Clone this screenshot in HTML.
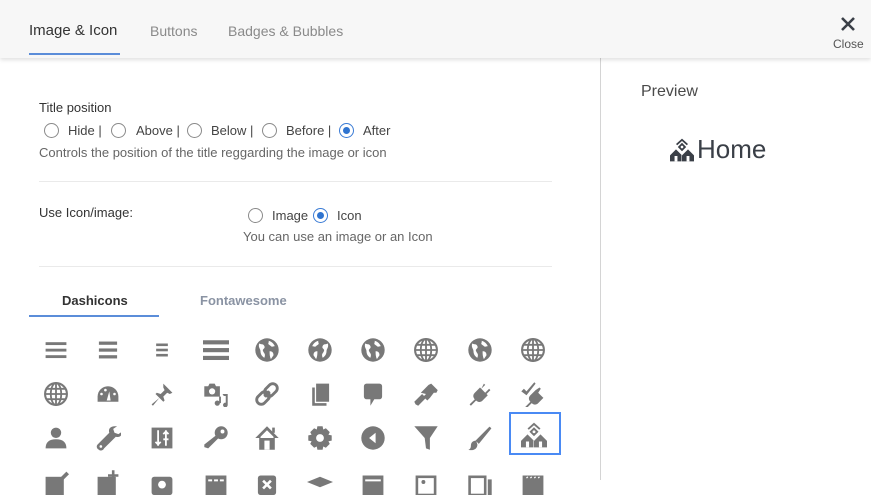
<!DOCTYPE html>
<html><head><meta charset="utf-8">
<style>
*{margin:0;padding:0;box-sizing:border-box}
html,body{width:871px;height:480px;overflow:hidden;background:#fff;font-family:"Liberation Sans",sans-serif;color:#333}
.abs{position:absolute;white-space:nowrap}
.hdr{position:absolute;left:0;top:0;width:871px;height:58px;background:#f7f7f7;box-shadow:0 2px 4px rgba(0,0,0,.12);z-index:2}
.radio{position:absolute;width:15px;height:15px;border:1px solid #8a8a8a;border-radius:50%;background:#fff}
.radio.on{border-color:#3a7bd5}
.radio.on::after{content:"";position:absolute;left:3px;top:3px;width:7px;height:7px;border-radius:50%;background:#2f74d0}
.t13{font-size:13px}
.ic{position:absolute;width:26px;height:26px}
</style></head><body>
<svg width="0" height="0" style="position:absolute">
<defs>
<g id="globe"><circle cx="10" cy="10" r="9" fill="#787878"/><path d="M4 5c2 1 3 0 4 2s-2 2-1 4 2 2 1 5c-2-1-3-3-3-5S3 8 4 5zM11 3c2 0 4 2 5 4-1 0-2 1-3 0s-2-1-2-2 1-1 0-2zM12 11c2 0 3 1 3 3l-2 3c-1-2-1-4-1-6z" fill="#fff"/></g>
<g id="grid"><circle cx="10" cy="10" r="8.4" fill="none" stroke="#787878" stroke-width="1.6"/><ellipse cx="10" cy="10" rx="4" ry="8.4" fill="none" stroke="#787878" stroke-width="1.4"/><path d="M10 1.6v16.8M1.6 10h16.8M3 6h14M3 14h14" stroke="#787878" stroke-width="1.4"/></g>
<g id="home3"><path d="M10 0.5L15 5 14 6 10 2.5 6 6 5 5z"/><path d="M10 4L13.5 7.5 10 11 6.5 7.5z"/><circle cx="10" cy="7.5" r="1.1" fill="#fff"/><path d="M0 14.5L5 9.5 10 14.5V19.5H0z"/><path d="M10 14.5L15 9.5 20 14.5V19.5H10z" stroke="#fff" stroke-width="0.8" paint-order="stroke"/><rect x="3.8" y="15" width="2.4" height="4.5" fill="#fff"/><rect x="13.8" y="15" width="2.4" height="4.5" fill="#fff"/></g>
</defs></svg>

<div class="hdr">
 <div class="abs" style="left:29px;top:22px;font-size:15px;color:#333">Image &amp; Icon</div>
 <div style="position:absolute;left:29px;top:53px;width:91px;height:2px;background:#5b8dd9"></div>
 <div class="abs" style="left:150px;top:23px;font-size:14px;color:#8a8a8a">Buttons</div>
 <div class="abs" style="left:228px;top:23px;font-size:14px;color:#8a8a8a">Badges &amp; Bubbles</div>
 <svg class="abs" style="left:840px;top:16px" width="16" height="16" viewBox="0 0 16 16"><path d="M2 2L14 14M14 2L2 14" stroke="#3a3f47" stroke-width="2.6"/></svg>
 <div class="abs" style="left:833px;top:37px;font-size:12px;color:#555">Close</div>
</div>
<div style="position:absolute;left:600px;top:58px;width:1px;height:422px;background:#d4d4d4"></div>

<div class="abs t13" style="left:39px;top:100px;color:#333">Title position</div>
<div class="radio" style="left:44px;top:123px"></div><div class="abs t13" style="left:68px;top:123px;color:#444">Hide |</div>
<div class="radio" style="left:111px;top:123px"></div><div class="abs t13" style="left:136px;top:123px;color:#444">Above |</div>
<div class="radio" style="left:187px;top:123px"></div><div class="abs t13" style="left:211px;top:123px;color:#444">Below |</div>
<div class="radio" style="left:262px;top:123px"></div><div class="abs t13" style="left:286px;top:123px;color:#444">Before |</div>
<div class="radio on" style="left:339px;top:123px"></div><div class="abs t13" style="left:363px;top:123px;color:#444">After</div>
<div class="abs t13" style="left:39px;top:145px;color:#666">Controls the position of the title reggarding the image or icon</div>
<div style="position:absolute;left:39px;top:181px;width:513px;height:1px;background:#eaeaea"></div>

<div class="abs t13" style="left:39px;top:205px;color:#333">Use Icon/image:</div>
<div class="radio" style="left:248px;top:208px"></div><div class="abs t13" style="left:272px;top:208px;color:#444">Image</div>
<div class="radio on" style="left:313px;top:208px"></div><div class="abs t13" style="left:337px;top:208px;color:#444">Icon</div>
<div class="abs t13" style="left:243px;top:229px;color:#666">You can use an image or an Icon</div>
<div style="position:absolute;left:39px;top:266px;width:513px;height:1px;background:#eaeaea"></div>

<div class="abs t13" style="left:62px;top:293px;font-weight:bold;color:#333">Dashicons</div>
<div class="abs t13" style="left:200px;top:293px;font-weight:bold;color:#8a93a3">Fontawesome</div>
<div style="position:absolute;left:29px;top:315px;width:130px;height:2px;background:#5b8dd9"></div>

<!-- row 1 -->
<svg class="ic" style="left:43px;top:337px" viewBox="0 0 20 20" fill="#787878"><rect x="2" y="4" width="16" height="2.2"/><rect x="2" y="9" width="16" height="2.2"/><rect x="2" y="14" width="16" height="2.2"/></svg>
<svg class="ic" style="left:95px;top:337px" viewBox="0 0 20 20" fill="#787878"><rect x="3" y="3.5" width="14" height="2.5"/><rect x="3" y="8.8" width="14" height="2.5"/><rect x="3" y="14" width="14" height="2.5"/></svg>
<svg class="ic" style="left:149px;top:337px" viewBox="0 0 20 20" fill="#787878"><rect x="5.5" y="5" width="9" height="2"/><rect x="5.5" y="9" width="9" height="2"/><rect x="5.5" y="13" width="9" height="2"/></svg>
<svg class="ic" style="left:203px;top:337px" viewBox="0 0 20 20" fill="#787878"><rect x="0" y="2.5" width="20" height="3.2"/><rect x="0" y="8.5" width="20" height="3.2"/><rect x="0" y="14.5" width="20" height="3.2"/></svg>
<svg class="ic" style="left:254px;top:337px" viewBox="0 0 20 20"><use href="#globe"/></svg>
<svg class="ic" style="left:307px;top:337px" viewBox="0 0 20 20"><use href="#globe" transform="translate(20 0) scale(-1 1)"/></svg>
<svg class="ic" style="left:360px;top:337px" viewBox="0 0 20 20"><use href="#globe"/></svg>
<svg class="ic" style="left:413px;top:337px" viewBox="0 0 20 20"><use href="#grid"/></svg>
<svg class="ic" style="left:467px;top:337px" viewBox="0 0 20 20"><use href="#globe"/></svg>
<svg class="ic" style="left:520px;top:337px" viewBox="0 0 20 20"><use href="#grid"/></svg>
<!-- row 2 -->
<svg class="ic" style="left:43px;top:381px" viewBox="0 0 20 20"><use href="#grid"/></svg>
<svg class="ic" style="left:95px;top:381px" viewBox="0 0 20 20" fill="#787878"><path d="M10 4a8 8 0 0 1 8 8v4H2v-4a8 8 0 0 1 8-8z"/><path d="M9 15l2-7 1 7z" fill="#fff"/><circle cx="5" cy="10" r="1" fill="#fff"/><circle cx="8" cy="7" r="1" fill="#fff"/><circle cx="15" cy="10" r="1" fill="#fff"/></svg>
<svg class="ic" style="left:149px;top:381px" viewBox="0 0 20 20" fill="#787878"><path d="M11 2l7 7-2 1-2-1-3 3 1 3-1 1-3-3-5 6-1-1 6-5-3-3 1-1 3 1 3-3-1-2z"/></svg>
<svg class="ic" style="left:203px;top:381px" viewBox="0 0 20 20" fill="#787878"><path d="M1 4h3l1-2h4l1 2h3v8H1z"/><circle cx="7" cy="8" r="2.4" fill="#fff"/><path d="M15 10h4v8.5a1.8 1.8 0 1 1-1.5-1.8V11.5H16z"/><circle cx="11" cy="17" r="2"/><rect x="12.4" y="12" width="1.4" height="5"/></svg>
<svg class="ic" style="left:254px;top:381px" viewBox="0 0 20 20" fill="none" stroke="#787878" stroke-width="2.2"><path d="M8 12l4-4"/><rect x="9.5" y="1.5" width="7" height="11" rx="3.5" transform="rotate(45 13 7)"/><rect x="3.5" y="7.5" width="7" height="11" rx="3.5" transform="rotate(45 7 13)"/></svg>
<svg class="ic" style="left:307px;top:381px" viewBox="0 0 20 20" fill="#787878"><path d="M7 2h10v14H7z"/><path d="M4 5h2v12h9v2H4z"/></svg>
<svg class="ic" style="left:360px;top:381px" viewBox="0 0 20 20" fill="#787878"><path d="M5 2h10a2 2 0 0 1 2 2v8a2 2 0 0 1-2 2h-4l-3 5v-5H5a2 2 0 0 1-2-2V4a2 2 0 0 1 2-2z"/></svg>
<svg class="ic" style="left:413px;top:381px" viewBox="0 0 20 20" fill="#787878"><path d="M12 3l2-1 5 5-1 2-2 0-3 4-2 2-3-3 2-2-4-1z"/><path d="M7 10l3 3-6 6-2-1-1-2z"/></svg>
<svg class="ic" style="left:467px;top:381px" viewBox="0 0 20 20" fill="#787878"><path d="M13 2l1 1-3 3 3 3 3-3 1 1-3 3 1 1-4 4c-2 2-4 1-5 0l-4 4-1-1 4-4c-1-1-2-3 0-5l4-4 1 1z"/></svg>
<svg class="ic" style="left:520px;top:381px" viewBox="0 0 20 20" fill="#787878"><path d="M1 8l2-2 2 2 6-7 1 1-7 9z"/><path d="M15 5l1 1-2 3 3 3 1 1-4 4c-2 2-4 1-5 0l-4 4-1-1 4-4c-1-1-2-3 0-5l4-4z"/></svg>
<!-- row 3 -->
<svg class="ic" style="left:43px;top:425px" viewBox="0 0 20 20" fill="#787878"><circle cx="10" cy="6" r="4"/><path d="M2 18c0-5 3-7 8-7s8 2 8 7z"/></svg>
<svg class="ic" style="left:95px;top:425px" viewBox="0 0 20 20" fill="#787878"><path d="M15 1c-3 0-5 2-4 5L2 15c-1 1-1 3 1 4 1 1 3 1 4-1l9-9c3 1 5-1 5-4l-3 2-3-1-1-3 3-2z"/><circle cx="4.5" cy="16.5" r="1" fill="#fff"/></svg>
<svg class="ic" style="left:149px;top:425px" viewBox="0 0 20 20" fill="#787878"><rect x="2" y="2" width="16" height="16"/><path d="M7 4v12M5 13l2 2 2-2M13 16V4M11 7l2-2 2 2M11 11h4" stroke="#fff" stroke-width="1.4" fill="none"/></svg>
<svg class="ic" style="left:203px;top:425px" viewBox="0 0 20 20" fill="#787878"><circle cx="14" cy="6" r="5"/><path d="M10 8l2 2-8 8-3-1 0-2z"/><circle cx="15" cy="5" r="1.5" fill="#fff"/></svg>
<svg class="ic" style="left:254px;top:425px" viewBox="0 0 20 20" fill="#787878"><path d="M10 1l9 9h-3v9H4v-9H1z"/><path d="M10 4l-5 5v1h10V9z" fill="#fff"/><rect x="8" y="12" width="4" height="7" fill="#fff"/><rect x="14" y="2" width="2" height="4"/></svg>
<svg class="ic" style="left:307px;top:425px" viewBox="0 0 20 20" fill="#787878"><path d="M8 1h4l.5 2.5 2-1 3 3-1 2 2.5.5v4l-2.5.5 1 2-3 3-2-1L12 19H8l-.5-2.5-2 1-3-3 1-2L1 12V8l2.5-.5-1-2 3-3 2 1z"/><circle cx="10" cy="10" r="3" fill="#fff"/></svg>
<svg class="ic" style="left:360px;top:425px" viewBox="0 0 20 20" fill="#787878"><circle cx="10" cy="10" r="9"/><path d="M7 10l5-4v8z" fill="#fff"/></svg>
<svg class="ic" style="left:413px;top:425px" viewBox="0 0 20 20" fill="#787878"><path d="M1 1h18l-6 9v9l-3-1-1-8z"/></svg>
<svg class="ic" style="left:467px;top:425px" viewBox="0 0 20 20" fill="#787878"><path d="M19 1L9 12l-1-1z"/><path d="M18 2l-9 11-1-1z" stroke="#787878" stroke-width="2"/><path d="M7 12c-3 0-4 2-4 4s-1 3-2 3c3 1 7 0 7-4z"/></svg>
<div style="position:absolute;left:509px;top:412px;width:52px;height:43px;border:2px solid #4a8af4"></div>
<svg class="ic" style="left:521px;top:422px" viewBox="0 0 20 20" fill="#787878"><use href="#home3"/></svg>
<!-- row 4 partial -->
<svg class="ic" style="left:43px;top:469px" viewBox="0 0 20 20" fill="#787878"><rect x="2" y="6" width="14" height="14"/><path d="M12 8l6-6 2 2-6 6z"/></svg>
<svg class="ic" style="left:95px;top:469px" viewBox="0 0 20 20" fill="#787878"><rect x="2" y="6" width="14" height="14"/><path d="M13 1h2v3h3v2h-3v3h-2V6h-3V4h3z"/></svg>
<svg class="ic" style="left:149px;top:469px" viewBox="0 0 20 20" fill="#787878"><rect x="2" y="6" width="16" height="14" rx="2"/><circle cx="10" cy="12" r="3" fill="#fff"/></svg>
<svg class="ic" style="left:203px;top:469px" viewBox="0 0 20 20" fill="#787878"><rect x="2" y="5" width="16" height="15"/><rect x="4" y="8" width="3" height="1.5" fill="#fff"/><rect x="8.5" y="8" width="3" height="1.5" fill="#fff"/><rect x="13" y="8" width="3" height="1.5" fill="#fff"/></svg>
<svg class="ic" style="left:254px;top:469px" viewBox="0 0 20 20" fill="#787878"><rect x="3" y="5" width="14" height="15" rx="2"/><path d="M7 9l6 6M13 9l-6 6" stroke="#fff" stroke-width="2"/></svg>
<svg class="ic" style="left:307px;top:469px" viewBox="0 0 20 20" fill="#787878"><path d="M10 6l10 4-10 4L0 10z"/></svg>
<svg class="ic" style="left:360px;top:469px" viewBox="0 0 20 20" fill="#787878"><rect x="2" y="5" width="16" height="15"/><rect x="4" y="8" width="12" height="1.5" fill="#fff"/></svg>
<svg class="ic" style="left:413px;top:469px" viewBox="0 0 20 20" fill="#787878"><rect x="2" y="5" width="16" height="15"/><rect x="4" y="7" width="12" height="12" fill="#fff"/><circle cx="8" cy="10" r="1.5"/></svg>
<svg class="ic" style="left:467px;top:469px" viewBox="0 0 20 20" fill="#787878"><rect x="1" y="5" width="14" height="15"/><rect x="3" y="7" width="10" height="12" fill="#fff"/><rect x="16" y="8" width="3" height="12"/></svg>
<svg class="ic" style="left:520px;top:469px" viewBox="0 0 20 20" fill="#787878"><rect x="2" y="5" width="16" height="15"/><path d="M5 7l1-1M8 7l1-1M11 7l1-1M14 7l1-1" stroke="#fff" stroke-width="1"/></svg>

<!-- preview -->
<div class="abs" style="left:641px;top:83px;font-size:16px;color:#4a4a4a">Preview</div>
<svg class="abs" style="left:669px;top:138px" width="26" height="24" viewBox="0 0 20 20" fill="#3a3f47"><use href="#home3"/></svg>
<div class="abs" style="left:697px;top:134px;font-size:26px;color:#3a3f47">Home</div>
</body></html>
